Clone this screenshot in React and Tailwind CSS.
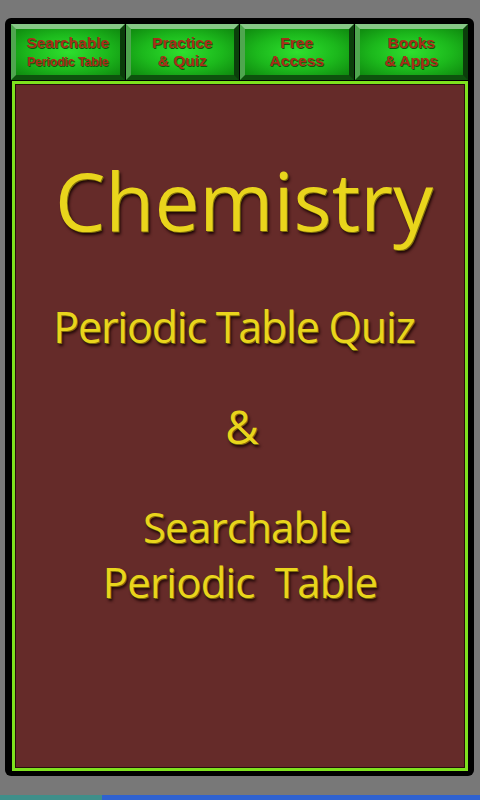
import React from 'react';

const tabs = [
  { top: 'Searchable', bottom: 'Periodic Table', small: true },
  { top: 'Practice', bottom: '& Quiz' },
  { top: 'Free', bottom: 'Access' },
  { top: 'Books', bottom: '& Apps' },
];

const TabButton = ({ top, bottom, small }) => (
  <div className="h-full border-[5px] border-t-[#86c886] border-l-[#4fa64f] border-r-[#0b3f0b] border-b-[#0d520d] bg-[radial-gradient(ellipse_at_center,#2ee02e_0%,#1cb81c_55%,#0f8a0f_100%)] flex items-center justify-center font-bold text-[#a92e1a] [text-shadow:1px_1px_0_#0b5c0b] font-['Liberation_Sans',Arial,sans-serif]">
    <p className="text-center text-[15.5px] leading-[18px]">
      {top}
      <br />
      {small ? <span className="text-[12.5px] tracking-[-0.2px]">{bottom}</span> : bottom}
    </p>
  </div>
);

const yellow = "text-[#e9d51c] [text-shadow:1px_1px_0_#7d6c0c,2px_3px_3px_#1c0605] font-['Open_Sans',sans-serif]";

export default function App() {
  return (
    <div className="w-[480px] h-[800px] bg-[#787878] flex flex-col overflow-hidden">
      <div className="pt-[18px] px-[5px] pr-[6px]">
        <div className="h-[758px] bg-black rounded-[6px] pt-[6px] px-[6px] pb-[5px] flex flex-col">
          {/* top buttons */}
          <div className="h-[56px] grid grid-cols-4 gap-[1px]">
            {tabs.map((t) => (
              <TabButton key={t.top} {...t} />
            ))}
          </div>

          {/* main framed panel */}
          <div className="flex-1 ml-[1px] mt-[1px] border-[3px] border-[#7ee21e] bg-[#652b29] shadow-[inset_0_0_0_1px_#2a0e0c] flex flex-col items-center">
            <div className={`${yellow} mt-[66px] pl-[8px] text-[80px] leading-[100px]`}>Chemistry</div>
            <div className={`${yellow} mt-[51px] pr-[12px] text-[43px] leading-[52px] tracking-[-1.2px]`}>Periodic Table Quiz</div>
            <div className={`${yellow} mt-[45px] pl-[4px] text-[46px] leading-[56px]`}>&amp;</div>
            <div className={`${yellow} mt-[47px] pl-[14px] text-[42px] leading-[52px] tracking-[-0.8px]`}>Searchable</div>
            <div className={`${yellow} mt-[3px] text-[42px] leading-[52px] tracking-[-0.8px] whitespace-pre`}>{'Periodic  Table'}</div>
          </div>
        </div>
      </div>

      <div className="flex-1" />
      <div className="h-[5px] flex">
        <div className="w-[102px] bg-[#3f8f8a]" />
        <div className="flex-1 bg-[#2f62d0]" />
      </div>
    </div>
  );
}
